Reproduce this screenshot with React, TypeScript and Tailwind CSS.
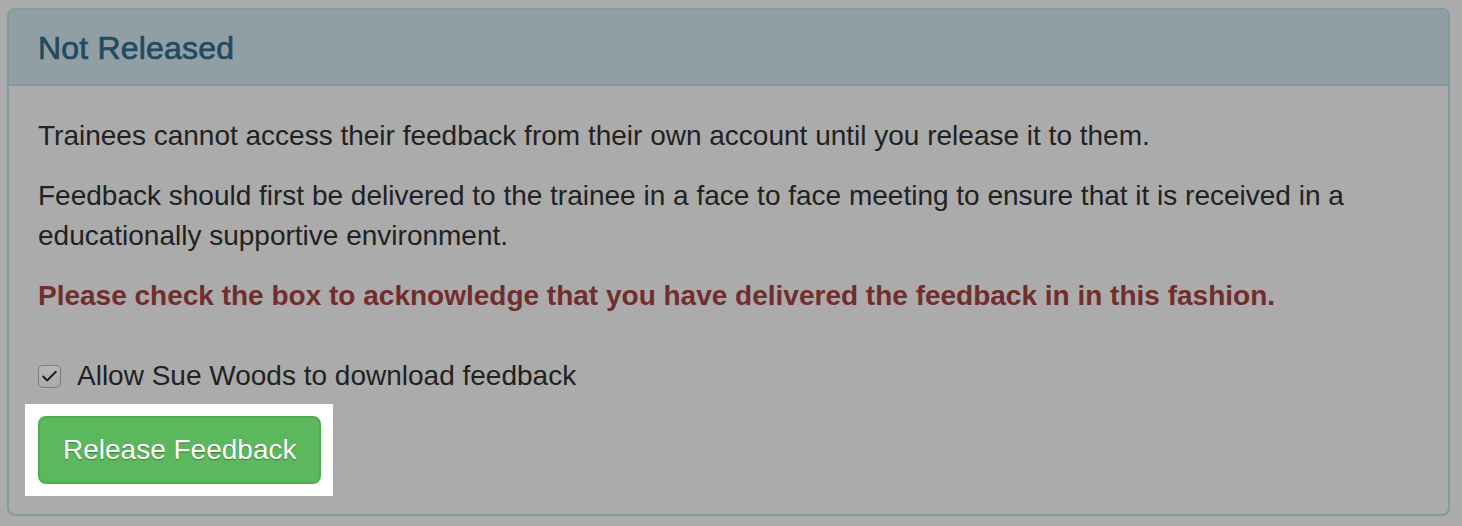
import { Check } from 'lucide-react';

const FONT = { fontFamily: '"Liberation Sans", Arial, Helvetica, sans-serif' };

export default function App() {
  return (
    <div className="min-h-[526px] w-[1462px] bg-[#ababab] pl-[7px] pt-[8px]" style={FONT}>
      <div className="w-[1443px] overflow-hidden rounded-[8px] border-2 border-[#7e9ba1]">
        {/* heading */}
        <div className="border-b-2 border-[#7e9ba1] bg-[#919fa5] px-[29px] pb-[19px] pt-[21px]">
          <h3 className="text-[32px] leading-[34px] tracking-[0.2px] text-[#214b60] [-webkit-text-stroke:0.7px_#214b60]">
            Not Released
          </h3>
        </div>

        {/* body */}
        <div className="px-[29px] py-[30px] text-[28px] leading-[40px] text-[#222222]">
          <p className="mb-[20px]">
            Trainees cannot access their feedback from their own account until you release it to them.
          </p>
          <p className="mb-[20px]">
            Feedback should first be delivered to the trainee in a face to face meeting to ensure that it is received in a
            educationally supportive environment.
          </p>
          <p className="mb-[40px] font-bold text-[#712e2c]">
            Please check the box to acknowledge that you have delivered the feedback in in this fashion.
          </p>

          <label className="mb-[20px] flex items-center gap-[16px]">
            <span className="flex h-[23px] w-[23px] items-center justify-center rounded-[5px] border border-[#7c7c7c] bg-gradient-to-b from-[#b8b8b8] to-[#aaaaaa]">
              <Check size={19} strokeWidth={2.4} className="text-[#1e1e1e]" />
            </span>
            <span>Allow Sue Woods to download feedback</span>
          </label>

          {/* highlighted action */}
          <div className="-mb-[12px] -ml-[13px] -mt-[12px] w-fit bg-white pb-[12px] pl-[13px] pr-[12px] pt-[12px]">
            <button
              className="h-[68px] rounded-[8px] border-2 border-[#4cae4c] bg-[#5cb85c] px-[23px] text-[28px] leading-[40px] text-white"
              style={{ textShadow: '0 1px 1px rgba(0,0,0,0.35)' }}
            >
              Release Feedback
            </button>
          </div>
        </div>
      </div>
    </div>
  );
}
